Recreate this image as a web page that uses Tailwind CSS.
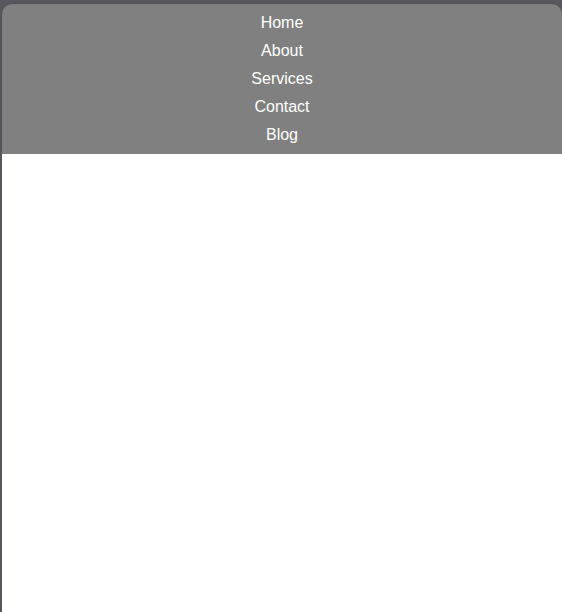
<!DOCTYPE html>
<html lang="en">
<head>
<meta charset="utf-8">
<meta name="viewport" content="width=device-width, initial-scale=1">
<title>Home</title>
<script src="https://cdn.jsdelivr.net/npm/@tailwindcss/browser@4"></script>
</head>
<body class="flex min-h-screen flex-col bg-[#57575d] pt-1 pl-0.5 font-['Liberation_Sans',Arial,sans-serif]">
<nav class="rounded-t-[10px] bg-[#808080] py-[5px] shadow-[0_0_2px_#00000033]" aria-label="Main">
<ul class="text-center text-base leading-7 text-white">
<li><a href="#home">Home</a></li>
<li><a href="#about">About</a></li>
<li><a href="#services">Services</a></li>
<li><a href="#contact">Contact</a></li>
<li><a href="#blog">Blog</a></li>
</ul>
</nav>
<main class="relative grow bg-white"></main>
</body>
</html>
